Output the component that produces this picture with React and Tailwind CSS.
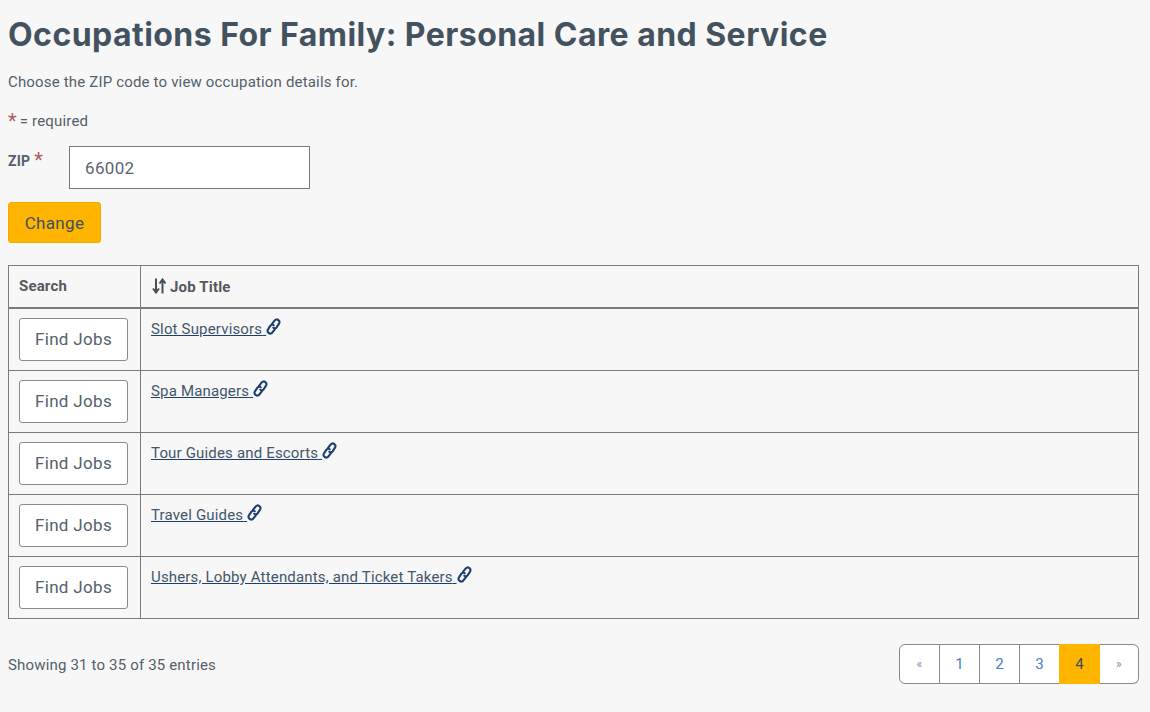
import React from "react";

const jobs = ["Slot Supervisors", "Spa Managers", "Tour Guides and Escorts", "Travel Guides", "Ushers, Lobby Attendants, and Ticket Takers"];

function ChainIcon() {
  return (
    <svg viewBox="0 0 14 16" className="inline-block w-[15px] h-[17px] align-[-1px] text-[#1d3f6e]" fill="none" stroke="currentColor" strokeWidth="2" strokeLinecap="round">
      <path d="M5.6 5.6 8.2 2.2a2.2 2.2 0 0 1 3.1-.4l.5.4a2.2 2.2 0 0 1 .4 3.1L9.9 8.8a2.2 2.2 0 0 1-3.1.4" />
      <path d="M8.4 10.4 5.8 13.8a2.2 2.2 0 0 1-3.1.4l-.5-.4a2.2 2.2 0 0 1-.4-3.1L4.1 7.2a2.2 2.2 0 0 1 3.1-.4" />
    </svg>
  );
}

function SortIcon() {
  return (
    <svg viewBox="0 0 14 16" className="w-[14px] h-[16px] -mt-[2px] ml-[1px]" fill="none" stroke="#4a4f54" strokeWidth="2">
      <path d="M4 0.5V14M1 10.5l3 4 3-4" />
      <path d="M10.5 15.5V2M7.5 5.5l3-4 3 4" />
    </svg>
  );
}

function PageCell({ children, active, small, extra }) {
  return (
    <div className={`h-[40px] flex items-center justify-center ${small ? "text-[12px] text-[#6f8fb0] bg-white" : active ? "text-[15px] bg-[#ffb500] text-[#3f4d5a]" : "text-[15px] bg-white text-[#3d7fc4]"} ${extra}`}>
      {children}
    </div>
  );
}

export default function App() {
  return (
    <div className="min-h-[712px] bg-[#f7f7f7] px-[8px] pt-[14px] pb-[28px] text-[#55606a] font-['Roboto',sans-serif] text-[15px] tracking-[0.17px] leading-[20px]">
      <h1 className="font-['Inter',sans-serif] font-bold text-[32px] leading-[42px] tracking-[0.45px] text-[#44525f]">
        Occupations For Family: Personal Care and Service
      </h1>
      <p className="mt-[16px] leading-[20px]">Choose the ZIP code to view occupation details for.</p>
      <p className="mt-[19px] leading-[20px] flex items-start">
        <span className="text-[#a8605f] text-[20px] leading-[20px] mr-[3px]">*</span>
        <span>= required</span>
      </p>
      <div className="mt-[15px] flex items-start">
        <label className="w-[61px] flex items-start font-bold text-[14px] text-[#55606a] pt-[5px]">
          ZIP<span className="text-[#a8605f] text-[20px] leading-[20px] font-normal ml-[4px] -mt-[1px]">*</span>
        </label>
        <div className="w-[241px] h-[43px] bg-white border border-[#7b7b7b] flex items-center pl-[15px] text-[17px] text-[#5b6570] tracking-[0.33px]">66002</div>
      </div>
      <button className="mt-[13px] h-[41px] w-[93px] rounded-[3px] bg-[#ffb500] border border-[#f2ad00] text-[17px] text-[#3f5160] tracking-[0.33px] block">Change</button>

      <div className="mt-[22px] w-[1131px] border border-[#7b7b7b]">
        <div className="flex h-[43px] border-b-2 border-[#7b7b7b] font-bold text-[#55595d]">
          <div className="w-[132px] shrink-0 border-r border-[#7b7b7b] pl-[10px] pb-[1px] flex items-center">Search</div>
          <div className="flex-1 pl-[10px] flex items-center gap-[4px]"><SortIcon /><span>Job Title</span></div>
        </div>
        {jobs.map((job, i) => (
          <div key={job} className={`flex ${i < jobs.length - 1 ? "h-[62px] border-b border-[#7b7b7b]" : "h-[61px]"}`}>
            <div className="w-[132px] shrink-0 border-r border-[#7b7b7b] pl-[10px] pt-[9px]">
              <button className="w-[109px] h-[43px] pb-[2px] bg-white border border-[#8a8a8a] rounded-[3px] text-[17px] text-[#55606a] tracking-[0.33px]">Find Jobs</button>
            </div>
            <div className="flex-1 pl-[10px] pt-[9px]">
              <a className="text-[#43566a] underline decoration-[#1d3f6e] whitespace-pre">{job} <ChainIcon /></a>
            </div>
          </div>
        ))}
      </div>

      <div className="mt-[25px] w-[1131px] flex items-start justify-between">
        <div className="pt-[11px]">Showing 31 to 35 of 35 entries</div>
        <div className="grid grid-cols-[41px_40px_40px_39px_41px_39px] w-[240px]">
          <PageCell small extra="border border-[#8a8a8a] rounded-l-[6px]">«</PageCell>
          <PageCell extra="border-y border-r border-[#8a8a8a]">1</PageCell>
          <PageCell extra="border-y border-r border-[#8a8a8a]">2</PageCell>
          <PageCell extra="border-y border-[#8a8a8a]">3</PageCell>
          <PageCell active>4</PageCell>
          <PageCell small extra="border-y border-r border-[#8a8a8a] rounded-r-[6px]">»</PageCell>
        </div>
      </div>
    </div>
  );
}
